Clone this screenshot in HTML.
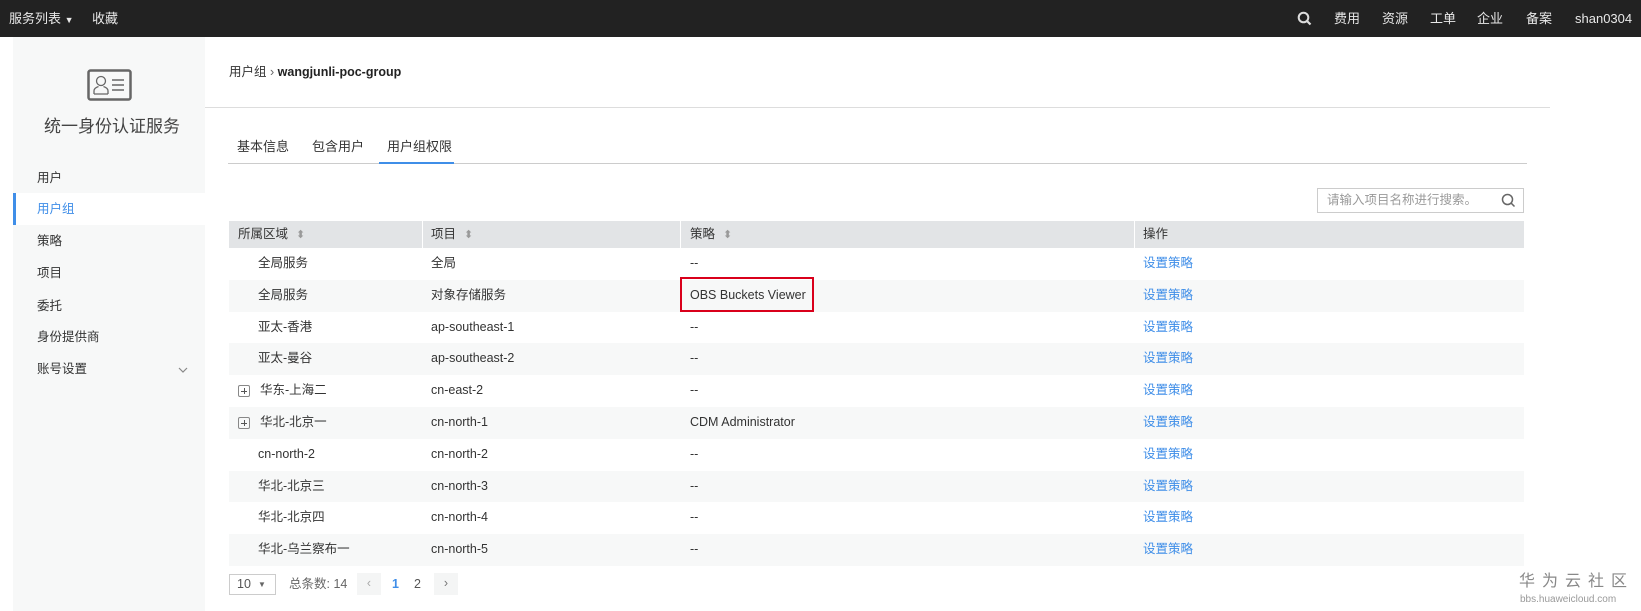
<!DOCTYPE html>
<html><head><meta charset="utf-8"><style>
*{margin:0;padding:0;box-sizing:border-box}
body{width:1641px;height:611px;overflow:hidden;background:#fff;font-family:"Liberation Sans","Noto Sans CJK SC",sans-serif;font-size:12.5px;color:#333;position:relative}
.a{position:absolute;white-space:nowrap}
.top{position:absolute;left:0;top:0;width:1641px;height:37px;background:#222}
.top .a{color:#e8e8e8;font-size:13px;top:0;line-height:37px}
.side{position:absolute;left:13px;top:37px;width:192px;height:574px;background:#f7f8f8}
.side .it{position:absolute;left:24px;font-size:12.5px;color:#333;line-height:20px}
.row{position:absolute;left:229px;width:1295px;height:31.8px}
.row .a{top:0;line-height:31.8px}
.row.g{background:#f7f8f8}
.lk{color:#3f8ee8}
.th{position:absolute;left:229px;top:221px;width:1295px;height:27px;background:#e2e4e6}
.th .a{top:0;line-height:27px}
.sep{position:absolute;top:0;width:1px;height:27px;background:#fff}
.sort{color:#999;font-size:11px;margin-left:8px}
.plus{position:absolute;left:9px;top:10px;width:12px;height:12px;border:1px solid #888;border-radius:2px}
.plus:before{content:"";position:absolute;left:2px;top:4.5px;width:6px;height:1px;background:#555}
.plus:after{content:"";position:absolute;left:4.5px;top:2px;width:1px;height:6px;background:#555}
.ln{line-height:20px}
</style></head><body>
<div class="top">
<span class="a" style="left:9px">服务列表 <span style="font-size:9px">▼</span></span>
<span class="a" style="left:92px">收藏</span>
<svg class="a" style="left:1297px;top:11px" width="15" height="15" viewBox="0 0 15 15"><circle cx="6.5" cy="6.5" r="4.8" fill="none" stroke="#ddd" stroke-width="2"/><path d="M10 10l3.5 3.5" stroke="#ddd" stroke-width="2.2"/></svg>
<span class="a" style="left:1334px">费用</span>
<span class="a" style="left:1382px">资源</span>
<span class="a" style="left:1430px">工单</span>
<span class="a" style="left:1477px">企业</span>
<span class="a" style="left:1526px">备案</span>
<span class="a" style="left:1575px">shan0304</span>
</div>
<div class="side">
<svg class="a" style="left:74px;top:32px" width="45" height="32" viewBox="0 0 45 32"><rect x="1.5" y="1.5" width="42" height="29" rx="2" fill="none" stroke="#666" stroke-width="2.5"/><circle cx="14" cy="12" r="4.5" fill="none" stroke="#666" stroke-width="1.3"/><path d="M7 25v-3c0-3 3-4 4.5-4.5M21 25v-3c0-3-3-4-4.5-4.5M7 25h14" fill="none" stroke="#666" stroke-width="1.3"/><path d="M25 11h12M25 16h12M25 21h12" stroke="#666" stroke-width="1.4"/></svg>
<span class="a" style="left:31px;top:78px;font-size:17px;color:#444;line-height:24px">统一身份认证服务</span>
<span class="it a" style="top:131px">用户</span>
<div class="a" style="left:0;top:156px;width:192px;height:32px;background:#fff;border-left:3px solid #3f8ee8"></div>
<span class="it a" style="top:162px;color:#3f8ee8">用户组</span>
<span class="it a" style="top:194px">策略</span>
<span class="it a" style="top:226px">项目</span>
<span class="it a" style="top:259px">委托</span>
<span class="it a" style="top:290px">身份提供商</span>
<span class="it a" style="top:322px">账号设置</span>
<svg class="a" style="left:165px;top:330px" width="10" height="7" viewBox="0 0 10 7"><path d="M1 1l4 4 4-4" fill="none" stroke="#888" stroke-width="1.2"/></svg>
</div>
<span class="a ln" style="left:229px;top:62px;font-size:12.5px">用户组 <span style="color:#666">›</span> <b style="color:#222">wangjunli-poc-group</b></span>
<div class="a" style="left:205px;top:107px;width:1345px;height:1px;background:#ddd"></div>
<span class="a ln" style="left:237px;top:137px;font-size:13px">基本信息</span>
<span class="a ln" style="left:312px;top:137px;font-size:13px">包含用户</span>
<span class="a ln" style="left:387px;top:137px;font-size:13px">用户组权限</span>
<div class="a" style="left:228px;top:163px;width:1299px;height:1px;background:#ccc"></div>
<div class="a" style="left:379px;top:162px;width:75px;height:2px;background:#3f8ee8"></div>
<div class="a" style="left:1317px;top:188px;width:207px;height:25px;border:1px solid #ccc"></div>
<span class="a" style="left:1327px;top:188px;color:#999;font-size:12.5px;line-height:25px">请输入项目名称进行搜索。</span>
<svg class="a" style="left:1501px;top:193px" width="15" height="15" viewBox="0 0 15 15"><circle cx="6.5" cy="6.5" r="5" fill="none" stroke="#666" stroke-width="1.5"/><path d="M10.2 10.2l3.3 3.3" stroke="#666" stroke-width="1.5"/></svg>
<div class="th">
<span class="a" style="left:9px">所属区域<span class="sort">⬍</span></span><div class="sep" style="left:193px"></div>
<span class="a" style="left:202px">项目<span class="sort">⬍</span></span><div class="sep" style="left:451px"></div>
<span class="a" style="left:461px">策略<span class="sort">⬍</span></span><div class="sep" style="left:905px"></div>
<span class="a" style="left:914px">操作</span>
</div>
<div class="row" style="top:248px"><span class="a" style="left:29px">全局服务</span><span class="a" style="left:202px">全局</span><span class="a" style="left:461px">--</span><span class="a lk" style="left:914px">设置策略</span></div>
<div class="row g" style="top:279.8px"><span class="a" style="left:29px">全局服务</span><span class="a" style="left:202px">对象存储服务</span><span class="a" style="left:461px">OBS Buckets Viewer</span><span class="a lk" style="left:914px">设置策略</span></div>
<div class="row" style="top:311.6px"><span class="a" style="left:29px">亚太-香港</span><span class="a" style="left:202px">ap-southeast-1</span><span class="a" style="left:461px">--</span><span class="a lk" style="left:914px">设置策略</span></div>
<div class="row g" style="top:343.4px"><span class="a" style="left:29px">亚太-曼谷</span><span class="a" style="left:202px">ap-southeast-2</span><span class="a" style="left:461px">--</span><span class="a lk" style="left:914px">设置策略</span></div>
<div class="row" style="top:375.2px"><div class="plus"></div><span class="a" style="left:31px">华东-上海二</span><span class="a" style="left:202px">cn-east-2</span><span class="a" style="left:461px">--</span><span class="a lk" style="left:914px">设置策略</span></div>
<div class="row g" style="top:407px"><div class="plus"></div><span class="a" style="left:31px">华北-北京一</span><span class="a" style="left:202px">cn-north-1</span><span class="a" style="left:461px">CDM Administrator</span><span class="a lk" style="left:914px">设置策略</span></div>
<div class="row" style="top:438.8px"><span class="a" style="left:29px">cn-north-2</span><span class="a" style="left:202px">cn-north-2</span><span class="a" style="left:461px">--</span><span class="a lk" style="left:914px">设置策略</span></div>
<div class="row g" style="top:470.6px"><span class="a" style="left:29px">华北-北京三</span><span class="a" style="left:202px">cn-north-3</span><span class="a" style="left:461px">--</span><span class="a lk" style="left:914px">设置策略</span></div>
<div class="row" style="top:502.4px"><span class="a" style="left:29px">华北-北京四</span><span class="a" style="left:202px">cn-north-4</span><span class="a" style="left:461px">--</span><span class="a lk" style="left:914px">设置策略</span></div>
<div class="row g" style="top:534.2px"><span class="a" style="left:29px">华北-乌兰察布一</span><span class="a" style="left:202px">cn-north-5</span><span class="a" style="left:461px">--</span><span class="a lk" style="left:914px">设置策略</span></div>
<div class="a" style="left:680px;top:277px;width:134px;height:35px;border:2px solid #d9001b"></div>
<div class="a" style="left:229px;top:574px;width:47px;height:21px;border:1px solid #ccc"></div>
<span class="a" style="left:237px;top:574px;color:#555;line-height:21px">10</span><span class="a" style="left:258px;top:574px;font-size:8px;color:#666;line-height:21px">▼</span>
<span class="a" style="left:289px;top:574px;color:#666;line-height:21px">总条数: 14</span>
<div class="a" style="left:357px;top:573px;width:24px;height:22px;background:#f4f5f5;color:#aaa;text-align:center;line-height:20px">‹</div>
<span class="a" style="left:392px;top:574px;color:#3f8ee8;font-weight:bold;line-height:21px">1</span>
<span class="a" style="left:414px;top:574px;color:#555;line-height:21px">2</span>
<div class="a" style="left:434px;top:573px;width:24px;height:22px;background:#f4f5f5;color:#777;text-align:center;line-height:20px">›</div>
<span class="a" style="left:1519px;top:572px;font-size:16px;color:#888;letter-spacing:7px;line-height:20px">华为云社区</span>
<span class="a" style="left:1520px;top:594px;font-size:10px;color:#999;line-height:12px">bbs.huaweicloud.com</span>
</body></html>
